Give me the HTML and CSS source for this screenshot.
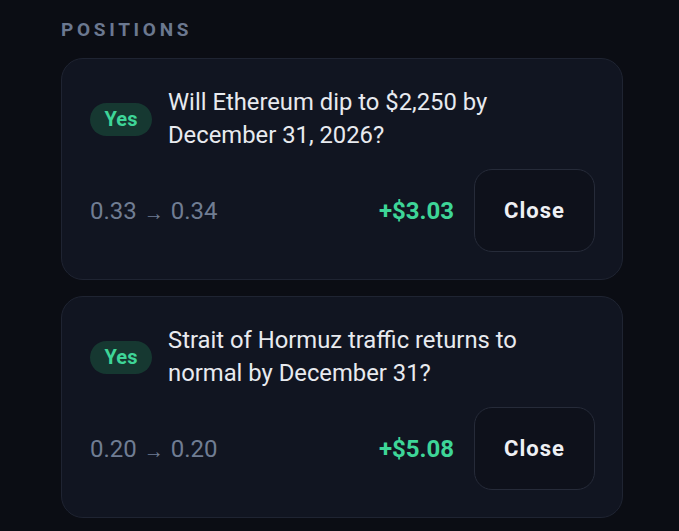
FILE: index.html
```html
<!DOCTYPE html>
<html>
<head>
<meta charset="utf-8">
<link rel="stylesheet" href="styles.css">
</head>
<body>
<div class="page">
  <div class="heading">POSITIONS</div>
  <div class="list">
    <div class="card">
      <div class="top">
        <span class="badge">Yes</span>
        <div class="title">Will Ethereum dip to $2,250 by December 31, 2026?</div>
      </div>
      <div class="bottom">
        <div class="prices">0.33 <span class="arrow">→</span> 0.34</div>
        <div class="right">
          <span class="pnl">+$3.03</span>
          <button class="close">Close</button>
        </div>
      </div>
    </div>
    <div class="card">
      <div class="top">
        <span class="badge">Yes</span>
        <div class="title">Strait of Hormuz traffic returns to normal by December 31?</div>
      </div>
      <div class="bottom">
        <div class="prices">0.20 <span class="arrow">→</span> 0.20</div>
        <div class="right">
          <span class="pnl">+$5.08</span>
          <button class="close">Close</button>
        </div>
      </div>
    </div>
  </div>
</div>
</body>
</html>
```
FILE: styles.css
```css
html, body {
  margin: 0;
  padding: 0;
  background: #0b0d14;
  font-family: Roboto, "Noto Sans", sans-serif;
}
.page {
  padding: 19px 56px 0 61px;
  width: 562px;
}
.heading {
  color: #6b7890;
  font-weight: 700;
  font-size: 19px;
  letter-spacing: 3.7px;
  line-height: 22px;
  margin-bottom: 17px;
}
.list {
  display: flex;
  flex-direction: column;
  gap: 16px;
}
.card {
  background: #111521;
  border: 1px solid #1f2432;
  border-radius: 22px;
  padding: 27px 27px 27px 28px;
  display: flex;
  flex-direction: column;
  gap: 17px;
}
.top {
  display: flex;
  align-items: center;
  gap: 16px;
}
.badge {
  flex: none;
  width: 62px;
  height: 33px;
  border-radius: 17px;
  background: #163831;
  color: #3ed598;
  font-weight: 700;
  font-size: 20px;
  display: flex;
  align-items: center;
  justify-content: center;
}
.title {
  color: #e8eaef;
  font-size: 23.8px;
  line-height: 33px;
  width: 380px;
}
.bottom {
  display: flex;
  align-items: center;
  justify-content: space-between;
}
.prices {
  color: #707d93;
  font-size: 24px;
}
.arrow {
  font-size: 20px;
  margin: 0 1px;
  position: relative;
  top: 1px;
}
.right {
  display: flex;
  align-items: center;
  gap: 20px;
}
.pnl {
  color: #3ed598;
  font-weight: 700;
  font-size: 24px;
}
.close {
  width: 121px;
  height: 83px;
  border-radius: 18px;
  border: 1px solid #262b39;
  background: #0e111b;
  color: #eef0f4;
  font-family: Roboto, "Noto Sans", sans-serif;
  font-weight: 700;
  font-size: 22px;
  letter-spacing: 1px;
  cursor: pointer;
}
```
